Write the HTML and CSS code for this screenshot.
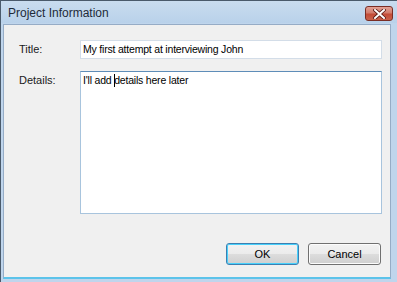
FILE: index.html
```html
<!DOCTYPE html>
<html lang="en">
<head>
  <meta charset="UTF-8">
  <title>Project Information</title>
  <link rel="stylesheet" href="styles.css">
</head>
<body>
  <div class="window">
    <div class="titlebar">
      <span class="title">Project Information</span>
      <button class="close" aria-label="Close">
        <svg width="13" height="10" viewBox="0 0 13 10">
          <path d="M2 1 L11 9 M11 1 L2 9" stroke="#5a1a14" stroke-width="3.6" stroke-linecap="square"/>
          <path d="M2 1 L11 9 M11 1 L2 9" stroke="#ffffff" stroke-width="2" stroke-linecap="square"/>
        </svg>
      </button>
    </div>
    <div class="client">
      <div class="form">
        <label class="label" for="title">Title:</label>
        <div class="field">My first attempt at interviewing John</div>
        <label class="label" for="details">Details:</label>
        <div class="field area">I'll add <span class="caret"></span>details here later</div>
      </div>
      <div class="buttons">
        <button class="btn default">OK</button>
        <button class="btn">Cancel</button>
      </div>
    </div>
  </div>
</body>
</html>
```

FILE: styles.css
```css
body {
  margin: 0;
  background: #ffffff;
  font-family: "Liberation Sans", Arial, sans-serif;
  font-size: 11px;
  color: #000000;
}

.window {
  width: 397px;
  height: 282px;
  box-sizing: border-box;
  background: #bfd5ec;
  border: 1px solid #4a5a6b;
  border-right: 0;
  border-bottom: 0;
  display: flex;
  flex-direction: column;
}

.titlebar {
  height: 22px;
  display: flex;
  align-items: center;
  justify-content: space-between;
  padding: 0 6px 0 7px;
  background: linear-gradient(#c9dcef, #b9d1ea);
}

.title {
  font-family: "Liberation Sans", Arial, sans-serif;
  font-size: 12px;
  color: #1e2a3a;
  margin-top: 2px;
}

.close {
  width: 28px;
  height: 15px;
  margin-top: 3px;
  margin-right: -2px;
  padding: 0;
  border: 1px solid #7a2d24;
  border-radius: 3px;
  background: linear-gradient(#e2a195, #d27c6c 45%, #c34b36 55%, #c8624c);
  display: flex;
  align-items: center;
  justify-content: center;
}

.client {
  flex: 1;
  margin: 1px 6px 3px 2px;
  background: #f0f0f0;
  border: 1px solid #96acc6;
  border-bottom: 2px solid #5cc3ea;
  display: flex;
  flex-direction: column;
  justify-content: space-between;
}

.form {
  display: grid;
  grid-template-columns: 61px 302px;
  row-gap: 12px;
  padding: 15px 0 0 15px;
}

.label {
  padding-top: 3px;
  color: #1a1a1a;
}

.field {
  height: 19px;
  box-sizing: border-box;
  background: #ffffff;
  border: 1px solid #d3dde8;
  padding: 2px 2px;
  font-size: 10.5px;
  letter-spacing: -0.2px;
  line-height: 13px;
  white-space: nowrap;
}

.area {
  height: 143px;
  border-color: #a8c4dd;
  border-top-color: #5e8db8;
}

.caret {
  display: inline-block;
  width: 1px;
  height: 13px;
  background: #000000;
  vertical-align: -3px;
  margin-right: -1px;
}

.buttons {
  display: flex;
  justify-content: flex-end;
  gap: 9px;
  padding: 0 9px 12px 0;
}

.btn {
  width: 73px;
  height: 22px;
  font-family: "Liberation Sans", Arial, sans-serif;
  font-size: 11px;
  color: #000000;
  border: 1px solid #707070;
  border-radius: 3px;
  background: linear-gradient(#f2f2f2, #ebebeb 50%, #dddddd 51%, #cfcfcf);
  box-shadow: inset 0 0 0 1px #fcfcfc;
}

.btn.default {
  border-color: #3c7fb1;
  box-shadow: inset 0 0 0 1px #48d0fb;
}
```
